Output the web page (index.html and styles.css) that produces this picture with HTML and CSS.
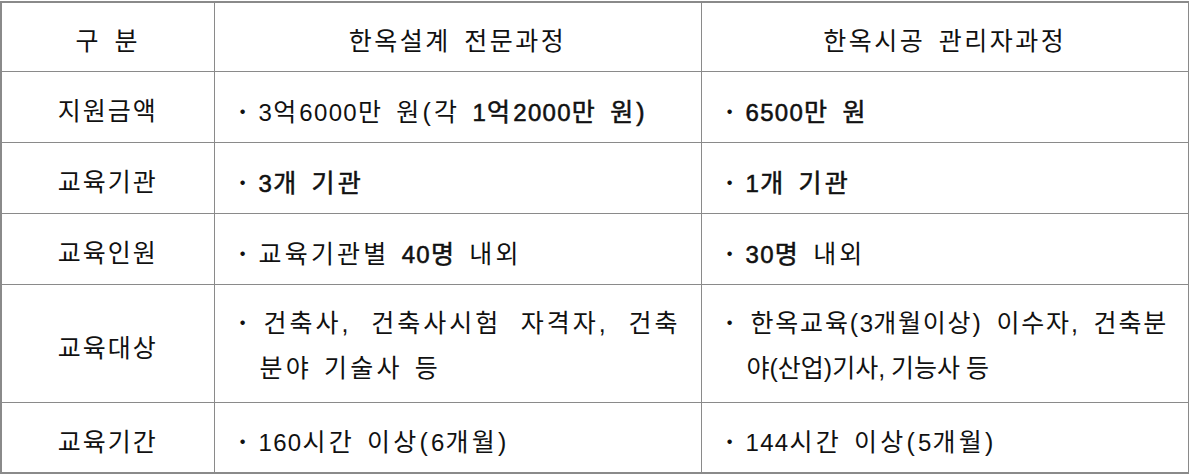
FILE: index.html
```html
<!DOCTYPE html>
<html lang="ko">
<head>
<meta charset="utf-8">
<title>한옥 교육과정</title>
<link rel="stylesheet" href="styles.css">
</head>
<body>
<table class="grid">
  <colgroup>
    <col class="c1">
    <col class="c2">
    <col class="c3">
  </colgroup>
  <tr class="r-head">
    <td class="center">구 분</td>
    <td class="center">한옥설계 전문과정</td>
    <td class="center">한옥시공 관리자과정</td>
  </tr>
  <tr class="r-std">
    <td class="center">지원금액</td>
    <td class="item"><span class="dot">ㆍ</span><span class="n">3</span>억<span class="n">6000</span>만 원(각 <b><span class="n">1</span>억<span class="n">2000</span>만 원)</b></td>
    <td class="item"><b><span class="dot">ㆍ</span><span class="n">6500</span>만 원</b></td>
  </tr>
  <tr class="r-std">
    <td class="center">교육기관</td>
    <td class="item"><b><span class="dot">ㆍ</span><span class="n">3</span>개 기관</b></td>
    <td class="item"><b><span class="dot">ㆍ</span><span class="n">1</span>개 기관</b></td>
  </tr>
  <tr class="r-std">
    <td class="center">교육인원</td>
    <td class="item"><span class="dot">ㆍ</span>교육기관별 <b><span class="n">40</span>명</b> 내외</td>
    <td class="item"><b><span class="dot">ㆍ</span><span class="n">30</span>명</b> 내외</td>
  </tr>
  <tr class="r-tall">
    <td class="center">교육대상</td>
    <td class="item multi">
      <div class="line just"><span class="dot">ㆍ</span><span class="txt wide">건축사, 건축사시험 자격자, 건축</span></div>
      <div class="line indent">분야 기술사 등</div>
    </td>
    <td class="item multi">
      <div class="line just"><span class="dot">ㆍ</span><span class="txt">한옥교육(<span class="n">3</span>개월이상) 이수자, 건축분</span></div>
      <div class="line indent tight">야(산업)기사, 기능사 등</div>
    </td>
  </tr>
  <tr class="r-std">
    <td class="center">교육기간</td>
    <td class="item"><span class="dot">ㆍ</span><span class="n">160</span>시간 이상(<span class="n">6</span>개월)</td>
    <td class="item"><span class="dot">ㆍ</span><span class="n">144</span>시간 이상(<span class="n">5</span>개월)</td>
  </tr>
</table>
</body>
</html>
```

FILE: styles.css
```css
html, body {
  margin: 0;
  padding: 0;
  background: #ffffff;
}

body {
  font-family: "Liberation Sans", "Noto Sans CJK KR", sans-serif;
  font-size: 25px;
  color: #111111;
}

.grid {
  border-collapse: collapse;
  table-layout: fixed;
  width: 1188px;
  margin-top: 1px;
  border: 2px solid #8a8a8a;
}

.c1 { width: 213px; }
.c2 { width: 487px; }
.c3 { width: 488px; }

.grid td {
  border: 1px solid #8a8a8a;
  padding: 9px 0 0 0;
  vertical-align: middle;
  letter-spacing: 2px;
  word-spacing: 2px;
  line-height: 30px;
}

.r-head { height: 69px; }
.r-std { height: 71px; }
.r-tall { height: 118px; }

.center {
  text-align: center;
}

.r-head .center {
  letter-spacing: 2.5px;
  word-spacing: 4px;
}

.item {
  text-align: left;
  padding-left: 12px !important;
  padding-right: 20px !important;
  white-space: nowrap;
  letter-spacing: 3.2px !important;
}

.n {
  font-size: 24px;
  letter-spacing: 1.3px;
}

.grid b {
  font-weight: 400;
  -webkit-text-stroke: 0.55px #111111;
}

.dot {
  display: inline-block;
  width: 32px;
  text-align: center;
  font-family: "Noto Sans CJK KR", sans-serif;
  font-weight: 700;
  letter-spacing: 0;
  -webkit-text-stroke: 0;
}

.multi {
  padding-top: 4px !important;
}

.line {
  line-height: 45px;
}

.just {
  display: flex;
  align-items: baseline;
}

.just .dot {
  flex: none;
  margin-right: 5px;
}

.txt {
  flex: 1;
  min-width: 0;
  text-align: justify;
  text-align-last: justify;
  letter-spacing: 1.8px;
  word-spacing: 0;
}

.txt.wide {
  letter-spacing: 3px;
}

.txt .n {
  letter-spacing: 0;
}

.indent {
  padding-left: 33px;
}

.tight {
  letter-spacing: 0;
  word-spacing: -1px;
}
```
